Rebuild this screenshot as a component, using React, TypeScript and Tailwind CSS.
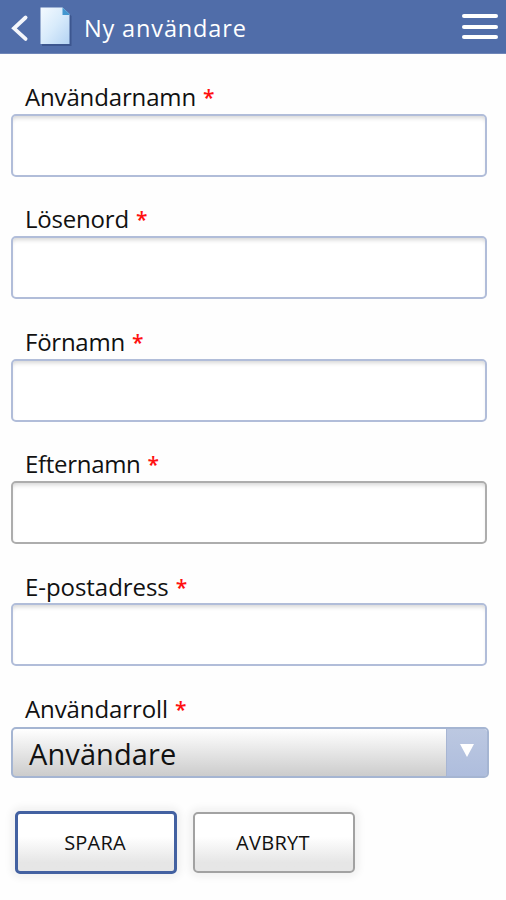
import { clsx } from "clsx";

interface FieldData {
  id: string;
  label: string;
  type?: string;
  spacing: string;
  muted?: boolean;
}

const FIELDS: FieldData[] = [
  { id: "username", label: "Användarnamn", spacing: "tracking-[-0.15px]" },
  { id: "password", label: "Lösenord", type: "password", spacing: "tracking-[-0.2px]" },
  { id: "firstname", label: "Förnamn", spacing: "tracking-[-0.25px]" },
  { id: "lastname", label: "Efternamn", spacing: "tracking-[-0.3px]", muted: true },
  { id: "email", label: "E-postadress", spacing: "tracking-[-0.05px]" },
];

function Header() {
  return (
    <header className="flex h-[54px] items-start border-b border-[#6f86b8] bg-[#506da9]">
      <button aria-label="Tillbaka" className="ml-2.5 mt-[13px] h-[30px] w-[20px]">
        <svg viewBox="0 0 20 30" className="h-[30px] w-[20px]" fill="none">
          <path
            d="M15.6 4.5 4 15.3l11.6 10.6"
            stroke="#f4f6fb"
            strokeWidth="3.8"
            strokeLinecap="round"
            strokeLinejoin="miter"
          />
        </svg>
      </button>
      <svg viewBox="0 0 34 42" className="ml-[9px] mt-[6px] h-[42px] w-[34px]">
        <defs>
          <linearGradient id="page" x1="0" y1="0" x2="1" y2="1">
            <stop offset="0" stopColor="#f4faff" />
            <stop offset="0.5" stopColor="#d8ebfb" />
            <stop offset="1" stopColor="#b4d3f3" />
          </linearGradient>
        </defs>
        <path d="M3 3h22l7.5 7v30H3z" fill="#354f87" opacity="0.75" />
        <path d="M1.5 1.5h22L30.5 8v30h-29z" fill="url(#page)" />
        <path d="M23.5 1.5 30.5 8v1h-7z" fill="#4397d0" />
      </svg>
      <h1 className="ml-[11px] mt-[12px] whitespace-nowrap text-[23.5px] font-medium leading-8 tracking-[0.85px] text-white">
        Ny användare
      </h1>
      <button aria-label="Meny" className="ml-auto mr-2 mt-[14px] flex flex-col gap-[6.5px]">
        <span className="h-[4px] w-[36px] rounded-[2px] bg-white" />
        <span className="h-[4px] w-[36px] rounded-[2px] bg-white" />
        <span className="h-[4px] w-[36px] rounded-[2px] bg-white" />
      </button>
    </header>
  );
}

function Label({ id, label, spacing }: FieldData) {
  return (
    <label htmlFor={id} className="ml-[14px] flex h-8 items-start text-2xl leading-8">
      <span className={spacing}>{label}</span>
      <span className="ml-[7px] text-[21px] font-semibold text-[#ff1010]">*</span>
    </label>
  );
}

function Field(props: FieldData) {
  return (
    <div className="flex h-[122.4px] flex-col">
      <Label {...props} />
      <input
        id={props.id}
        type={props.type ?? "text"}
        className={clsx(
          "mt-[0.9px] h-[63px] w-[476px] rounded-[5px] border-2 bg-white px-3 text-2xl shadow-[inset_0_4px_4px_-2px_#d6d6d6] outline-none",
          props.muted ? "border-[#adadad]" : "border-[#b1bdd9]",
        )}
      />
    </div>
  );
}

export default function App() {
  return (
    <div className="min-h-[900px] w-[506px] bg-[#fefefe] font-['Open_Sans','Noto_Sans',sans-serif] text-[#111]">
      <Header />
      <form className="pl-[11px] pt-[27px]" onSubmit={(e) => e.preventDefault()}>
        {FIELDS.map((field) => (
          <Field key={field.id} {...field} />
        ))}
        <Label id="role" label="Användarroll" spacing="tracking-[-0.1px]" />
        <button
          id="role"
          type="button"
          className="mt-[2px] flex h-[51px] w-[478px] overflow-hidden rounded-[5px] border-2 border-[#a5b5d2] bg-linear-to-b from-white to-[#cccccc] text-left"
        >
          <span className="flex-1 pl-4 text-[29px] leading-[49px] tracking-[0.1px]">Användare</span>
          <span className="flex h-full w-[41px] justify-center border-l border-[#a7b5d3] bg-linear-to-b from-[#bcc8e1] to-[#aebddd] pt-[15px]">
            <svg viewBox="0 0 14 13" className="h-[13px] w-[14px]">
              <path d="M0 0h14L7 13z" fill="#fff" />
            </svg>
          </span>
        </button>
        <div className="mt-[33px] flex items-center gap-4 pl-1">
          <button
            type="submit"
            className="h-[63px] w-[162px] rounded-[5px] border-[3px] border-[#4361a1] bg-linear-to-b from-white from-40% to-[#e6e6e6] to-85% pr-0.5 pt-0.5 text-xl tracking-[0.2px] shadow-[0_0_8px_3px_#eeeeee]"
          >
            SPARA
          </button>
          <button
            type="button"
            className="h-[61px] w-[162px] rounded-[5px] border-2 border-[#a2a2a2] bg-linear-to-b from-white from-40% to-[#e6e6e6] to-85% pr-0.5 pt-0.5 text-xl tracking-[0.3px] shadow-[0_0_8px_3px_#eeeeee]"
          >
            AVBRYT
          </button>
        </div>
      </form>
    </div>
  );
}
